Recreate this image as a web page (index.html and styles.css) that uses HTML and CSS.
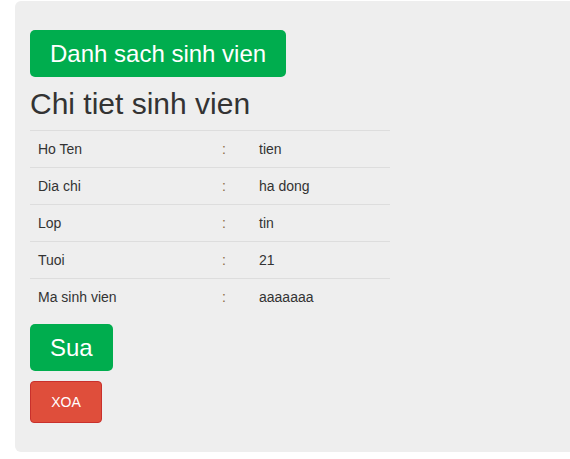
FILE: index.html
```html
<!DOCTYPE html>
<html>
<head>
<meta charset="utf-8">
<link rel="stylesheet" href="styles.css">
</head>
<body>
<div class="wrap">
  <div class="panel">
    <a class="btn btn-green btn-big">Danh sach sinh vien</a>
    <h2 class="title">Chi tiet sinh vien</h2>
    <table class="info">
      <tr><td class="c-label">Ho Ten</td><td class="c-sep">:</td><td class="c-val">tien</td></tr>
      <tr><td class="c-label">Dia chi</td><td class="c-sep">:</td><td class="c-val">ha dong</td></tr>
      <tr><td class="c-label">Lop</td><td class="c-sep">:</td><td class="c-val">tin</td></tr>
      <tr><td class="c-label">Tuoi</td><td class="c-sep">:</td><td class="c-val">21</td></tr>
      <tr><td class="c-label">Ma sinh vien</td><td class="c-sep">:</td><td class="c-val">aaaaaaa</td></tr>
    </table>
    <div class="actions">
      <a class="btn btn-green btn-big">Sua</a>
      <a class="btn btn-red">XOA</a>
    </div>
  </div>
</div>
</body>
</html>
```

FILE: styles.css
```css
html, body {
  margin: 0;
  padding: 0;
  overflow: hidden;
  background: #fff;
  font-family: "Liberation Sans", Arial, sans-serif;
  color: #333;
}
.wrap {
  padding: 1px 0 0 15px;
}
.panel {
  background: #eeeeee;
  border-radius: 6px;
  margin-right: -20px;
  padding: 29px 15px 29px 15px;
  height: 393px;
}
.btn {
  display: inline-block;
  box-sizing: border-box;
  color: #fff;
  text-decoration: none;
  text-align: center;
  white-space: nowrap;
}
.btn-big {
  font-size: 24px;
  line-height: 31px;
  padding: 8px 20px;
  border-radius: 5px;
  height: 47px;
}
.btn-green {
  background: #00ad4e;
}
.btn-red {
  background: #df4e3b;
  border: 1px solid #c9302c;
  border-radius: 4px;
  font-size: 14px;
  line-height: 20px;
  padding: 10px 20px;
  height: 42px;
  width: 72px;
}
.title {
  font-size: 30px;
  font-weight: normal;
  line-height: 33px;
  margin: 10px 0 10px 0;
  color: #333;
}
.info {
  border-collapse: collapse;
  width: 360px;
  font-size: 14px;
  line-height: 20px;
}
.info td {
  border-top: 1px solid #dddddd;
  padding: 8px;
  vertical-align: top;
}
.c-label { width: 168px; }
.c-sep { width: 21px; color: #8a6a45; }
.c-val { color: #333; }
.actions {
  display: flex;
  flex-direction: column;
  align-items: flex-start;
  gap: 10px;
  margin-top: 9px;
}
```
